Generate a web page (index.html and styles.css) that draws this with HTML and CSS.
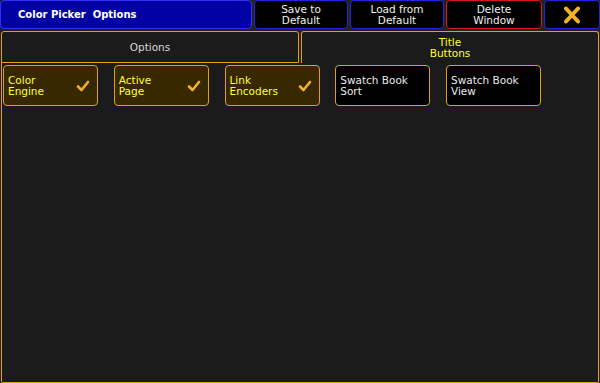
FILE: index.html
```html
<!DOCTYPE html>
<html lang="en">
<head>
	<meta charset="utf-8">
	<title>Color Picker Options</title>
	<link rel="stylesheet" href="styles.css">
</head>
<body>
	<div class="window">
		<div class="header">
			<div class="title">Color Picker&nbsp; Options</div>
			<div class="hbtn">Save to<br>Default</div>
			<div class="hbtn">Load from<br>Default</div>
			<div class="hbtn danger">Delete<br>Window</div>
			<div class="hbtn close">
				<svg width="20" height="18" viewBox="0 0 20 18">
					<path d="M4 2.5 L16 15.5 M16 2.5 L4 15.5" stroke="#f2b128" stroke-width="4" stroke-linecap="round"/>
				</svg>
			</div>
		</div>
		<div class="tabs">
			<div class="tab">Options</div>
			<div class="tab active">Title<br>Buttons</div>
		</div>
		<div class="panel">
			<div class="opt on">
				<span>Color<br>Engine</span>
				<svg class="check" width="14" height="12" viewBox="0 0 14 12"><path d="M2 6.5 L5.5 10 L12 2" fill="none" stroke="#f2b128" stroke-width="2.6" stroke-linecap="round" stroke-linejoin="round"/></svg>
			</div>
			<div class="opt on">
				<span>Active<br>Page</span>
				<svg class="check" width="14" height="12" viewBox="0 0 14 12"><path d="M2 6.5 L5.5 10 L12 2" fill="none" stroke="#f2b128" stroke-width="2.6" stroke-linecap="round" stroke-linejoin="round"/></svg>
			</div>
			<div class="opt on">
				<span>Link<br>Encoders</span>
				<svg class="check" width="14" height="12" viewBox="0 0 14 12"><path d="M2 6.5 L5.5 10 L12 2" fill="none" stroke="#f2b128" stroke-width="2.6" stroke-linecap="round" stroke-linejoin="round"/></svg>
			</div>
			<div class="opt">
				<span>Swatch Book<br>Sort</span>
			</div>
			<div class="opt">
				<span>Swatch Book<br>View</span>
			</div>
		</div>
	</div>
</body>
</html>
```

FILE: styles.css
```css
*{
	margin: 0;
	box-sizing: border-box;
}

body{
	background: #222;
	font-family: 'DejaVu Sans', sans-serif;
	font-size: 10.5px;
	line-height: 11px;
	color: #e8e8e8;
}

.window{
	width: 600px;
	height: 383px;
	display: flex;
	flex-direction: column;
}

.header{
	display: flex;
	gap: 2px;
	height: 29px;
}

.title{
	width: 252px;
	background: #0202a4;
	border: 1px solid #3030f0;
	border-radius: 4px;
	color: #fff;
	font-weight: bold;
	font-size: 10px;
	display: flex;
	align-items: center;
	padding-left: 17px;
}

.hbtn{
	width: 94px;
	background: #000;
	border: 1px solid #2323e0;
	border-radius: 4px;
	display: flex;
	align-items: center;
	justify-content: center;
	text-align: center;
	color: #f0f0f0;
}

.hbtn.danger{
	width: 96px;
	border-color: #d81818;
}

.hbtn.close{
	width: 56px;
}

.tabs{
	display: flex;
	gap: 2px;
	margin-top: 2px;
	padding: 0 1px 0 1px;
	height: 32px;
}

.tab{
	flex: 1;
	background: #1b1b1b;
	border: 1px solid #e3a00c;
	border-radius: 3px 3px 0 0;
	display: flex;
	align-items: center;
	justify-content: center;
	text-align: center;
	color: #d8d8d8;
}

.tab.active{
	border-bottom: none;
	color: #ffff30;
}

.panel{
	flex: 1;
	margin: 0 1px;
	background: #1b1b1b;
	border: 1px solid #e3a00c;
	border-top: none;
	border-radius: 0 0 2px 2px;
	display: flex;
	align-items: flex-start;
	gap: 15.75px;
	padding: 2px 0 0 1px;
}

.opt{
	width: 95px;
	height: 41px;
	background: #000;
	border: 1px solid #e3a00c;
	border-radius: 4px;
	display: flex;
	align-items: center;
	justify-content: space-between;
	padding: 0 7px 0 4px;
	color: #e8e8e8;
}

.opt.on{
	background: #382800;
	color: #ffff38;
}

.check{
	display: block;
}
```
